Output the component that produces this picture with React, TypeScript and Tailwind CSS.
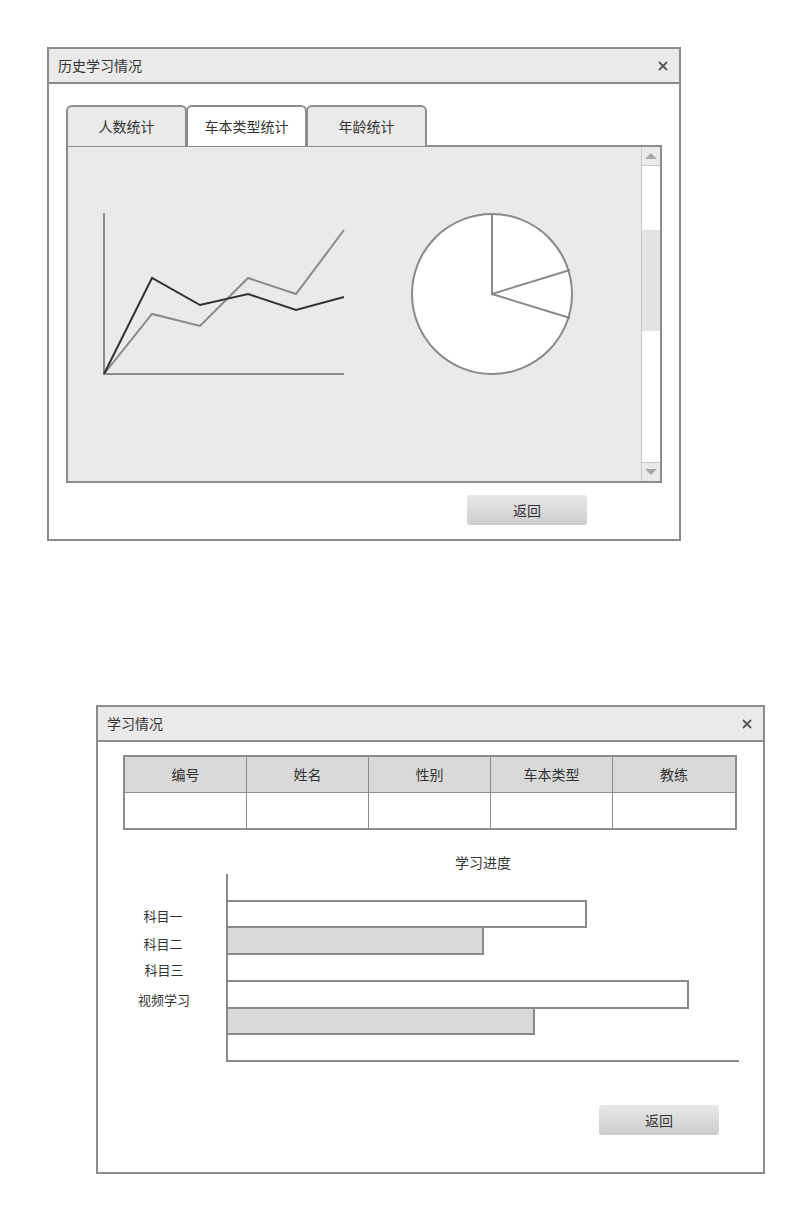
import React from "react";

const font = { fontFamily: '"Noto Sans CJK SC", "Noto Sans", sans-serif' };

function CloseX() {
  return (
    <svg width="10" height="10" viewBox="0 0 10 10">
      <path d="M1 1 L9 9 M9 1 L1 9" stroke="#555" strokeWidth="1.8" />
    </svg>
  );
}

function Header({ title }: { title: string }) {
  return (
    <div className="flex h-[35px] items-center justify-between border-b-2 border-[#8c8c8c] bg-[#eaeaea] pl-[9px] pr-[11px] text-[14px] text-[#333]">
      <span>{title}</span>
      <CloseX />
    </div>
  );
}

function BackButton() {
  return (
    <div className="flex h-[30px] w-[120px] items-center justify-center rounded-[3px] bg-gradient-to-b from-[#e8e8e8] to-[#cdcdcd] text-[14px] text-[#333]">
      返回
    </div>
  );
}

function Tab({ label, active }: { label: string; active?: boolean }) {
  return (
    <div
      className={
        "relative -mr-[1px] flex h-[41px] w-[121px] items-center justify-center rounded-t-[6px] border-2 border-[#8c8c8c] text-[14px] text-[#333] " +
        (active ? "z-10 border-b-0 bg-white" : "border-b-0 bg-[#eaeaea]")
      }
    >
      {label}
    </div>
  );
}

function Dialog1() {
  return (
    <div className="ml-[47px] mt-[47px] h-[494px] w-[634px] border-2 border-[#8c8c8c] bg-white">
      <Header title="历史学习情况" />
      <div className="pl-[17px] pt-[21px]">
        <div className="flex">
          <Tab label="人数统计" />
          <Tab label="车本类型统计" active />
          <Tab label="年龄统计" />
        </div>
        <div className="-mt-[1px] flex h-[338px] w-[596px] border-2 border-[#8c8c8c] bg-[#eaeaea]">
          <svg width="573" height="334" viewBox="0 0 573 334" className="shrink-0">
            <line x1="36" y1="66" x2="36" y2="228" stroke="#8a8a8a" strokeWidth="2" />
            <line x1="35" y1="227" x2="276" y2="227" stroke="#8a8a8a" strokeWidth="2" />
            <polyline
              points="36,227 84,167 132,179 180,131 228,147 276,83"
              fill="none"
              stroke="#8a8a8a"
              strokeWidth="2"
            />
            <polyline
              points="36,227 84,131 132,158 180,147 228,163 276,150"
              fill="none"
              stroke="#333"
              strokeWidth="2"
            />
            <circle cx="424" cy="147" r="80" fill="#fff" stroke="#8a8a8a" strokeWidth="2" />
            <path d="M424 67 L424 147 L502 123 M424 147 L502 171" fill="none" stroke="#8a8a8a" strokeWidth="2" />
          </svg>
          <div className="flex w-[19px] shrink-0 flex-col border-l border-[#c8c8c8] bg-white">
            <div className="flex h-[19px] items-center justify-center border-b border-[#c8c8c8] bg-[#eaeaea]">
              <svg width="12" height="6" viewBox="0 0 12 6">
                <path d="M0 6 L6 0 L12 6 Z" fill="#a8a8a8" />
              </svg>
            </div>
            <div className="h-[64px]" />
            <div className="h-[101px] bg-[#e3e3e3]" />
            <div className="flex-1" />
            <div className="flex h-[19px] items-center justify-center border-t border-[#c8c8c8] bg-[#eaeaea]">
              <svg width="12" height="6" viewBox="0 0 12 6">
                <path d="M0 0 L6 6 L12 0 Z" fill="#a8a8a8" />
              </svg>
            </div>
          </div>
        </div>
        <div className="ml-[401px] mt-[12px]">
          <BackButton />
        </div>
      </div>
    </div>
  );
}

function Dialog2() {
  const cols = ["编号", "姓名", "性别", "车本类型", "教练"];
  return (
    <div className="ml-[96px] mt-[164px] h-[469px] w-[669px] border-2 border-[#8c8c8c] bg-white">
      <Header title="学习情况" />
      <div className="pl-[25px] pt-[13px]">
        <div className="w-[614px] border-2 border-[#8c8c8c]">
          <div className="grid h-[36px] grid-cols-5 border-b border-[#8c8c8c] bg-[#d9d9d9]">
            {cols.map((c, i) => (
              <div
                key={c}
                className={
                  "flex items-center justify-center text-[14px] text-[#333] " +
                  (i < 4 ? "border-r border-[#8c8c8c]" : "")
                }
              >
                {c}
              </div>
            ))}
          </div>
          <div className="grid h-[35px] grid-cols-5 bg-white">
            {cols.map((c, i) => (
              <div key={c} className={i < 4 ? "border-r border-[#8c8c8c]" : ""} />
            ))}
          </div>
        </div>
      </div>
      <div className="mt-[22px] flex w-[665px] justify-center pl-[105px] text-[14px] leading-[20px] text-[#333]">
        学习进度
      </div>
      <svg width="665" height="190" viewBox="0 0 665 190" className="mt-[2px] block">
        <line x1="129" y1="0" x2="129" y2="188" stroke="#8a8a8a" strokeWidth="2" />
        <rect x="129" y="27" width="359" height="26" fill="#fff" stroke="#8a8a8a" strokeWidth="2" />
        <rect x="129" y="53" width="256" height="27" fill="#d9d9d9" stroke="#8a8a8a" strokeWidth="2" />
        <rect x="129" y="107" width="461" height="27" fill="#fff" stroke="#8a8a8a" strokeWidth="2" />
        <rect x="129" y="134" width="307" height="26" fill="#d9d9d9" stroke="#8a8a8a" strokeWidth="2" />
        <line x1="128" y1="187" x2="641" y2="187" stroke="#8a8a8a" strokeWidth="2" />
        <g fontSize="13" fill="#333" textAnchor="middle" dominantBaseline="central" style={font}>
          <text x="65" y="41">科目一</text>
          <text x="65" y="69">科目二</text>
          <text x="66" y="95">科目三</text>
          <text x="66" y="125">视频学习</text>
        </g>
      </svg>
      <div className="ml-[501px] mt-[41px]">
        <BackButton />
      </div>
    </div>
  );
}

export default function App() {
  return (
    <div className="min-h-[1205px] w-[796px] overflow-hidden bg-white pb-[30px]" style={font}>
      <Dialog1 />
      <Dialog2 />
    </div>
  );
}
